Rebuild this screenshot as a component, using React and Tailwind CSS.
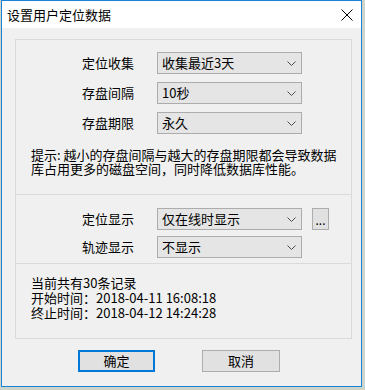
import React from "react";

function Chevron() {
  return (
    <svg width="9" height="5" viewBox="0 0 9 5" className="shrink-0">
      <path d="M0.5 0.5 L4.5 4.5 L8.5 0.5" stroke="#4d4d4d" strokeWidth="1" fill="none" />
    </svg>
  );
}

function Combo({ text }) {
  return (
    <div className="w-[145px] h-[22px] bg-[#e5e5e5] border border-[#acacac] flex items-center justify-between pl-[4px] pr-[5px]">
      <span className="leading-[20px]">{text}</span>
      <Chevron />
    </div>
  );
}

function Row({ label, value, extra }) {
  return (
    <div className="flex items-center">
      <div className="w-[75px] leading-[22px]">{label}</div>
      <Combo text={value} />
      {extra}
    </div>
  );
}

export default function App() {
  return (
    <div className="w-[365px] h-[390px] bg-[#cfd4cb] font-['Noto_Sans_CJK_SC',sans-serif] text-[13px] text-black">
      <div className="ml-[1px] w-[361px] h-[387px] border border-[#1883d7] bg-[#f0f0f0] flex flex-col">
        <div className="h-[27px] bg-white flex items-center justify-between pl-[5px] pr-[8px]">
          <span className="leading-[16px]">设置用户定位数据</span>
          <svg width="12" height="12" viewBox="0 0 12 12">
            <path d="M0.5 0.5 L11.5 11.5 M11.5 0.5 L0.5 11.5" stroke="#000" strokeWidth="1" />
          </svg>
        </div>
        <div className="pt-[11px] pl-[13px] pr-[8px] flex flex-col">
          <div className="w-[337px] border border-[#dadada] flex flex-col">
            <div className="pt-[12px] pb-[18px] flex flex-col">
              <div className="pl-[66px] flex flex-col gap-[8px]">
                <Row label="定位收集" value="收集最近3天" />
                <Row label="存盘间隔" value="10秒" />
                <Row label="存盘期限" value="永久" />
              </div>
              <div className="pl-[15px] mt-[14px] leading-[14px]">
                <div>提示: 越小的存盘间隔与越大的存盘期限都会导致数据</div>
                <div>库占用更多的磁盘空间，同时降低数据库性能。</div>
              </div>
            </div>
            <div className="border-t border-[#dadada] pt-[13px] pb-[5px] pl-[66px] flex flex-col gap-[6px]">
              <Row
                label="定位显示"
                value="仅在线时显示"
                extra={
                  <div className="ml-[10px] w-[17px] h-[22px] bg-[#e1e1e1] border border-[#adadad] flex items-end justify-center pb-[2px] leading-[14px] text-[12px]">
                    ...
                  </div>
                }
              />
              <Row label="轨迹显示" value="不显示" />
            </div>
            <div className="border-t border-[#dadada] pt-[11px] pb-[18px] pl-[15px] leading-[15px]">
              <div>当前共有30条记录</div>
              <div>开始时间：2018-04-11 16:08:18</div>
              <div>终止时间：2018-04-12 14:24:28</div>
            </div>
          </div>
        </div>
        <div className="mt-[11px] flex pl-[76px] gap-[47px]">
          <div className="w-[77px] h-[22px] bg-[#e1e1e1] border-2 border-[#0078d7] flex items-center justify-center leading-[16px]">
            确定
          </div>
          <div className="w-[78px] h-[22px] bg-[#e1e1e1] border border-[#adadad] flex items-center justify-center leading-[16px]">
            取消
          </div>
        </div>
      </div>
    </div>
  );
}
